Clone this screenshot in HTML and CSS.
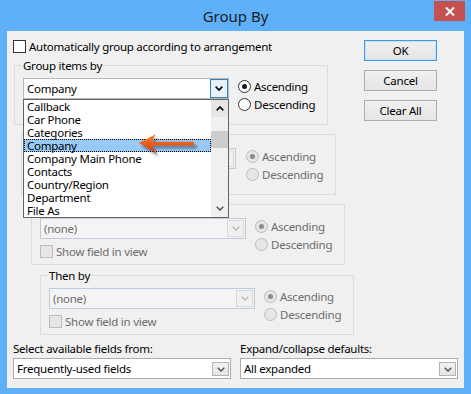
FILE: index.html
```html
<!DOCTYPE html>
<html lang="en">
<head>
<meta charset="utf-8">
<title>Group By</title>
<link rel="stylesheet" href="styles.css">
</head>
<body>
<div class="window">
  <header class="titlebar">
    <div class="title">Group By</div>
    <div class="close"><svg width="10" height="9" viewBox="0 0 10 9"><path d="M1 0.5 L9 8.5 M9 0.5 L1 8.5" stroke="#fff" stroke-width="2" fill="none"/></svg></div>
  </header>
  <div class="client">
    <div class="main">
      <div class="left">
        <label class="check"><span class="box"></span><span>Automatically group according to arrangement</span></label>

        <fieldset class="group g1">
          <legend>Group items by</legend>
          <div class="grid">
            <div class="combo-wrap">
              <div class="combo focus"><span class="val">Company</span><span class="cbtn"><svg width="8" height="5" viewBox="0 0 8 5"><path d="M0.7 0.7 L4 4 L7.3 0.7" stroke="#000" stroke-width="1.7" fill="none"/></svg></span></div>
              <div class="droplist">
                <ul class="items">
                  <li>Callback</li>
                  <li>Car Phone</li>
                  <li>Categories</li>
                  <li class="sel">Company</li>
                  <li>Company Main Phone</li>
                  <li>Contacts</li>
                  <li>Country/Region</li>
                  <li>Department</li>
                  <li>File As</li>
                </ul>
                <div class="scrollbar">
                  <div class="sb-btn up"><svg width="8" height="5" viewBox="0 0 8 5"><path d="M0.7 4.3 L4 1 L7.3 4.3" stroke="#111" stroke-width="1.7" fill="none"/></svg></div>
                  <div class="sb-track"><div class="sb-thumb"></div></div>
                  <div class="sb-btn"><svg width="8" height="5" viewBox="0 0 8 5"><path d="M0.7 0.7 L4 4 L7.3 0.7" stroke="#555" stroke-width="1.5" fill="none"/></svg></div>
                </div>
              </div>
              <svg class="pointer" width="66" height="30" viewBox="0 0 66 30">
                <defs>
                  <linearGradient id="og" x1="0" y1="0" x2="0" y2="1">
                    <stop offset="0" stop-color="#f7853a"/>
                    <stop offset="0.45" stop-color="#e8601c"/>
                    <stop offset="1" stop-color="#bf4410"/>
                  </linearGradient>
                  <filter id="sh" x="-20%" y="-40%" width="140%" height="180%"><feGaussianBlur stdDeviation="1.3"/></filter>
                </defs>
                <path d="M6 16 L23 7 Q20 12.5 20.5 14.7 L62 14.7 L62 18.7 L20.5 18.7 Q20 20 24 27 Z" fill="rgba(20,30,60,0.4)" filter="url(#sh)"/>
                <path d="M4 13 L21 4 Q17.5 9.5 18 11.7 L59 11.7 L59 15.7 L18 15.7 Q17.5 17 22 24 Z" fill="url(#og)"/>
              </svg>
            </div>
            <div class="radios">
              <label class="radio"><span class="dot on"></span>Ascending</label>
              <label class="radio"><span class="dot"></span>Descending</label>
            </div>
          </div>
        </fieldset>

        <fieldset class="group g2 disabled">
          <legend>Then by</legend>
          <div class="grid">
            <div class="combo dis"><span class="val">(none)</span><span class="cbtn"><svg width="8" height="5" viewBox="0 0 8 5"><path d="M0.7 0.7 L4 4 L7.3 0.7" stroke="#bcbcbc" stroke-width="1.5" fill="none"/></svg></span></div>
            <div class="radios">
              <label class="radio"><span class="dot on"></span>Ascending</label>
              <label class="radio"><span class="dot"></span>Descending</label>
            </div>
            <label class="check small"><span class="box"></span><span>Show field in view</span></label>
          </div>
        </fieldset>

        <fieldset class="group g3 disabled">
          <legend>Then by</legend>
          <div class="grid">
            <div class="combo dis"><span class="val">(none)</span><span class="cbtn"><svg width="8" height="5" viewBox="0 0 8 5"><path d="M0.7 0.7 L4 4 L7.3 0.7" stroke="#bcbcbc" stroke-width="1.5" fill="none"/></svg></span></div>
            <div class="radios">
              <label class="radio"><span class="dot on"></span>Ascending</label>
              <label class="radio"><span class="dot"></span>Descending</label>
            </div>
            <label class="check small"><span class="box"></span><span>Show field in view</span></label>
          </div>
        </fieldset>

        <fieldset class="group g4 disabled">
          <legend>Then by</legend>
          <div class="grid">
            <div class="combo dis"><span class="val">(none)</span><span class="cbtn"><svg width="8" height="5" viewBox="0 0 8 5"><path d="M0.7 0.7 L4 4 L7.3 0.7" stroke="#bcbcbc" stroke-width="1.5" fill="none"/></svg></span></div>
            <div class="radios">
              <label class="radio"><span class="dot on"></span>Ascending</label>
              <label class="radio"><span class="dot"></span>Descending</label>
            </div>
            <label class="check small"><span class="box"></span><span>Show field in view</span></label>
          </div>
        </fieldset>
      </div>

      <div class="buttons">
        <button class="push default">OK</button>
        <button class="push">Cancel</button>
        <button class="push">Clear All</button>
      </div>
    </div>

    <div class="bottom">
      <div class="field">
        <div class="flabel">Select available fields from:</div>
        <div class="combo"><span class="val">Frequently-used fields</span><span class="cbtn"><svg width="8" height="5" viewBox="0 0 8 5"><path d="M0.7 0.7 L4 4 L7.3 0.7" stroke="#555" stroke-width="1.5" fill="none"/></svg></span></div>
      </div>
      <div class="field">
        <div class="flabel">Expand/collapse defaults:</div>
        <div class="combo"><span class="val">All expanded</span><span class="cbtn"><svg width="8" height="5" viewBox="0 0 8 5"><path d="M0.7 0.7 L4 4 L7.3 0.7" stroke="#555" stroke-width="1.5" fill="none"/></svg></span></div>
      </div>
    </div>
  </div>
</div>
</body>
</html>
```

FILE: styles.css
```css
* { box-sizing: border-box; }
html, body { margin: 0; padding: 0; }
body {
  width: 471px;
  height: 394px;
  overflow: hidden;
  background: #5eb0f8;
  font-family: "Noto Sans", "Liberation Sans", sans-serif;
  font-size: 11.5px;
  letter-spacing: -0.25px;
  color: #000;
}
.window { display: flex; flex-direction: column; height: 394px; }

.titlebar { height: 31px; display: flex; align-items: flex-start; padding-left: 37px; }
.title { flex: 1; text-align: center; font-size: 15px; letter-spacing: 0; line-height: 20px; padding-top: 6px; color: #1f1f1f; }
.close { width: 31px; height: 20px; margin: 1px 6px 0 0; background: #c75050; display: flex; align-items: center; justify-content: center; }

.client { flex: 1; margin: 0 7px 6px; background: #f0f0f0; padding: 8px 0 0 6px; }
.main { display: flex; }
.left { width: 341px; }
.buttons { margin-left: 10px; padding-top: 1px; display: flex; flex-direction: column; gap: 9px; }

.push {
  width: 73px; height: 21px; padding: 0;
  font: inherit; line-height: 15px; color: #000; letter-spacing: inherit;
  border: 1px solid #adadad;
  background: linear-gradient(#f0f0f0, #e5e5e5);
}
.push.default { border-color: #3c9cf0; box-shadow: inset 0 0 0 1px #bfe0fb; }

.check { display: flex; align-items: center; gap: 3px; height: 15px; line-height: 15px; }
.box { width: 13px; height: 13px; border: 1px solid #333; background: #fff; flex: none; }

fieldset.group {
  margin: 2px 0 0;
  padding: 5px 0 6px 8px;
  border: 1px solid #dcdcdc;
  width: 314px;
  min-width: 0;
}
fieldset.group legend { padding: 0 1px; margin-left: -1px; line-height: 15px; }
fieldset.g1 { margin: 4px 0 0 1px; }
fieldset.g2 { margin-left: 8px; width: 315px; padding-top: 6px; }
fieldset.g3 { margin-left: 18px; padding-top: 6px; }
fieldset.g4 { margin-left: 27px; margin-top: 3px; }

.grid {
  display: grid;
  grid-template-columns: 206px auto;
  grid-template-rows: 21px auto;
  column-gap: 9px;
  min-height: 40px;
}
.grid .radios { grid-column: 2; grid-row: 1 / span 2; }
.grid .check { grid-column: 1; grid-row: 2; margin-top: 6px; height: 13px; }
.g2 .grid { column-gap: 10px; }

.radios { padding-top: 2px; display: flex; flex-direction: column; gap: 5px; }
.radio { display: flex; align-items: center; gap: 3px; height: 13px; line-height: 15px; }
.dot {
  width: 13px; height: 13px; border-radius: 50%;
  border: 1px solid #333; background: #fff; flex: none;
  display: flex; align-items: center; justify-content: center;
}
.dot.on::after { content: ""; width: 5px; height: 5px; border-radius: 50%; background: #1a1a1a; }

.disabled .radio, .disabled .check, .disabled .val { color: #6d6d6d; }
.disabled .dot { border-color: #bcbcbc; background: #e6e6e6; }
.disabled .dot.on::after { background: #8b8b8b; }
.disabled .box { border-color: #bcbcbc; background: #e6e6e6; }

.combo {
  height: 21px; width: 100%;
  display: flex; align-items: stretch;
  border: 1px solid #acacac; background: #fff;
}
.combo .val { flex: 1; padding-left: 3px; line-height: 19px; white-space: nowrap; overflow: hidden; }
.cbtn {
  width: 17px; margin: 3px 1px 2px 0;
  border: 1px solid #b4b4b4;
  background: linear-gradient(#f2f2f2, #e4e4e4);
  display: flex; align-items: center; justify-content: center;
}
.combo.focus { border-color: #b9b9b9; }
.combo.focus .cbtn { width: 18px; margin: 0; border-color: #3c7fb1; background: #e5f1fb; }
.combo.dis { border-color: #bdcbdb; background: #f4f4f4; }
.combo.dis .cbtn { margin: 1px 1px 1px 0; border-color: #dadada; background: #f0f0f0; }

.combo-wrap { position: relative; }
.droplist {
  position: absolute; left: 0; top: 100%;
  width: 206px; height: 119px;
  border: 1px solid #646464; background: #fff;
  display: flex; z-index: 10;
}
.items { list-style: none; margin: 0; padding: 0; flex: 1; }
.items li { height: 13px; line-height: 13px; padding-left: 3px; white-space: nowrap; }
.items li.sel { background: #99c9f5; outline: 1px dotted #000; outline-offset: -1px; }
.scrollbar { width: 17px; display: flex; flex-direction: column; background: #f0f0f0; }
.sb-btn { height: 17px; display: flex; align-items: center; justify-content: center; }
.sb-btn.up { background: #e6e6e6; }
.sb-track { flex: 1; padding-top: 14px; }
.sb-thumb { height: 17px; background: #cdcdcd; }
.pointer { position: absolute; left: 112px; top: 52px; z-index: 11; }

.bottom { margin-top: 6px; display: grid; grid-template-columns: 218px 218px; column-gap: 9px; }
.flabel { line-height: 15px; margin-bottom: 2px; }
```
